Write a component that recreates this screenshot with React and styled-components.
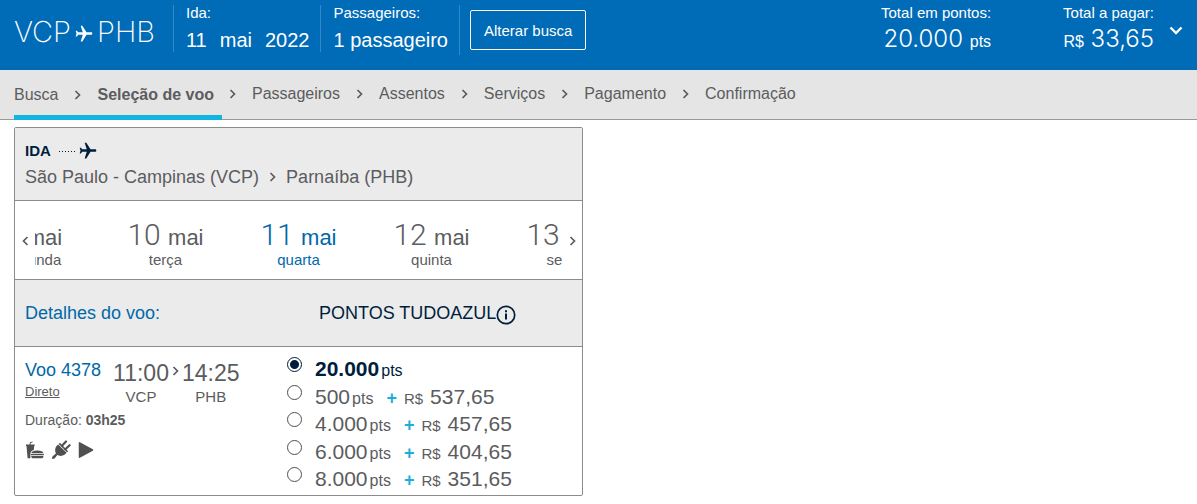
import React, { useState } from "react";
import styled, { createGlobalStyle } from "styled-components";
import { MdFlight } from "react-icons/md";

const GlobalStyle = createGlobalStyle`
    * {
        box-sizing: border-box;
    }
    body {
        margin: 0;
        background-color: #fff;
        color: #5b5c5e;
        font-family: "Liberation Sans", Arial, sans-serif;
        font-size: 15px;
    }
    button {
        font-family: inherit;
        color: inherit;
        cursor: pointer;
    }
`;

const Header = styled.header`
    min-height: 70px;
    padding: 5px 14px 0;
    background-color: #006bb7;
    color: #fff;
    display: flex;
    align-items: flex-start;
`;

const Airports = styled.div`
    height: 52px;
    margin-right: 18px;
    display: flex;
    align-items: center;
    gap: 3px;
    font-family: Inter, sans-serif;
    font-weight: 200;
    font-size: 29px;

    svg {
        margin-top: 5px;
    }
`;

const PlaneIcon = styled(MdFlight)`
    transform: rotate(90deg);
    flex-shrink: 0;
`;

const TripInfo = styled.div`
    min-height: 45px;
    padding: 0 11px 0 12px;
    border-left: 1px solid #3389c5;
`;

const ChangeSearch = styled.div`
    min-height: 50px;
    padding: 5px 10px 0;
    border-left: 1px solid #3389c5;
`;

const InfoLabel = styled.div`
    font-size: 15px;
    line-height: 16px;
    white-space: nowrap;
`;

const InfoValue = styled.div`
    display: flex;
    gap: 13px;
    margin-top: 7px;
    font-size: 20px;
    line-height: 24px;
    white-space: nowrap;
`;

const ChangeButton = styled.button`
    height: 40px;
    padding: 0 13px;
    border: 1px solid #fff;
    border-radius: 2px;
    background: none;
    font-size: 15px;
    white-space: nowrap;
`;

const Totals = styled.div`
    margin-left: auto;
    display: flex;
    gap: 72px;
    text-align: right;
`;

const TotalValue = styled.div`
    margin-top: 2px;
    font-family: Inter, sans-serif;
    font-weight: 300;
    font-size: 24px;
    line-height: 32px;
    white-space: nowrap;

    small {
        font-family: "Liberation Sans", Arial, sans-serif;
        font-weight: 400;
        font-size: 16px;
    }
`;

const ToggleButton = styled.button`
    margin: 18px 0 0 15px;
    padding: 0;
    border: none;
    background: none;
    display: flex;
`;

const Steps = styled.nav`
    min-height: 50px;
    padding: 0 14px;
    background-color: #e5e5e5;
    border-bottom: 1px solid #999;
    display: flex;
`;

const StepGroup = styled.div`
    display: flex;
    align-items: center;
    gap: 16px;
    padding-bottom: 1px;
`;

const DoneSteps = styled(StepGroup)`
    padding: 4px 8px 0 0;
    margin: 0 7px -1px 0;
    border-bottom: 5px solid #12b5de;
`;

const Step = styled.a`
    color: inherit;
    text-decoration: none;
    font-size: 16px;
    line-height: 20px;
    font-weight: ${({ $current }) => ($current ? "bold" : "normal")};
    white-space: nowrap;
`;

const Main = styled.main`
    padding: 7px 14px;
    display: grid;
    grid-template-columns: 1fr 1fr;
    gap: 31px;
`;

const Card = styled.section`
    border: 1px solid #8c8c8c;
    border-radius: 2px;
    min-width: 0;
`;

const RouteHeader = styled.div`
    padding: 13px 10px 12px;
    background-color: #ebebeb;
    border-bottom: 1px solid #8c8c8c;
`;

const Direction = styled.div`
    display: flex;
    align-items: center;
    gap: 3px;
    color: #001e3c;
    font-weight: bold;
    font-size: 15px;
    line-height: 20px;
`;

const Dots = styled.span`
    width: 16px;
    height: 1px;
    margin-left: 5px;
    background: repeating-linear-gradient(90deg, #001e3c 0 1px, transparent 1px 3px);
`;

const Route = styled.div`
    margin-top: 5px;
    display: flex;
    align-items: center;
    gap: 10px;
    font-size: 18px;
    line-height: 22px;
`;

const DateBar = styled.div`
    display: flex;
    border-bottom: 1px solid #8c8c8c;
`;

const ArrowButton = styled.button`
    width: 20px;
    padding: 2px 0 0;
    border: none;
    background: none;
    display: flex;
    align-items: center;
    justify-content: center;
`;

const DateStrip = styled.div`
    flex: 1;
    min-width: 0;
    overflow: hidden;
    display: flex;
    justify-content: center;
`;

const DateButton = styled.button`
    flex: 0 0 133px;
    padding: 17px 0 11px;
    border: none;
    background: none;
    color: ${({ $selected }) => ($selected ? "#0068a9" : "inherit")};
    text-align: center;
`;

const DayMonth = styled.div`
    font-family: Roboto, sans-serif;
    font-weight: 300;
    font-size: 30px;
    line-height: 34px;

    small {
        font-family: "Liberation Sans", Arial, sans-serif;
        font-weight: 400;
        font-size: 22px;
        line-height: 1;
    }
`;

const Weekday = styled.div`
    font-size: 15px;
    line-height: 16px;
`;

const FareHeader = styled.div`
    min-height: 67px;
    padding: 0 10px;
    background-color: #ebebeb;
    border-bottom: 1px solid #8c8c8c;
    display: grid;
    grid-template-columns: 294px 1fr;
    align-items: center;
    font-size: 18px;
`;

const DetailsTitle = styled.div`
    color: #0068a9;
`;

const FareTitle = styled.div`
    display: flex;
    align-items: center;
    color: #001e3c;
    white-space: nowrap;

    svg {
        margin-top: 3px;
    }
`;

const Flight = styled.div`
    min-height: 148px;
    padding-left: 10px;
    display: grid;
    grid-template-columns: 262px 1fr;
`;

const FlightDetails = styled.div`
    padding-top: 12px;
`;

const FlightTop = styled.div`
    display: flex;
    gap: 12px;
`;

const FlightNumber = styled.div`
    color: #0068a9;
    font-size: 18px;
    line-height: 22px;
`;

const Stops = styled.a`
    display: block;
    margin-top: 3px;
    color: #5b5c5e;
    font-size: 13px;
    line-height: 16px;
    text-decoration: underline;
`;

const Times = styled.div`
    display: flex;
    gap: 3px;

    svg {
        margin-top: 7px;
    }
`;

const Leg = styled.div`
    text-align: center;
    font-size: 15px;
    line-height: 20px;
`;

const Hour = styled.div`
    font-size: 23px;
    line-height: 28px;
`;

const Duration = styled.div`
    margin-top: 3px;
    font-size: 14px;
    line-height: 20px;
`;

const Amenities = styled.div`
    margin-top: 10px;
    display: flex;
    align-items: center;
    gap: 7px;
    color: #4f5052;
`;

const Fares = styled.div`
    padding: 8px 0 2px;
    display: grid;
    grid-auto-rows: 1fr;
`;

const FareRow = styled.label`
    display: flex;
    align-items: flex-start;
    gap: 13px;
    color: ${({ $selected }) => ($selected ? "#001e3c" : "inherit")};
    font-size: 16px;
    line-height: 20px;
    cursor: pointer;
`;

const Radio = styled.input`
    appearance: none;
    width: 15px;
    height: 15px;
    margin: 2px 0 0;
    border: 1px solid #4f5052;
    border-radius: 50%;
    background-color: #fff;

    &:checked {
        border-color: #001e3c;
        background: radial-gradient(#001e3c 4px, #fff 5px);
    }
`;

const FareText = styled.span`
    padding-top: 1px;
    display: flex;
    align-items: baseline;
    white-space: nowrap;
`;

const Points = styled.span`
    margin-right: 2px;
    font-size: 21px;
    line-height: 26px;
    font-weight: ${({ $selected }) => ($selected ? "bold" : "normal")};
`;

const Plus = styled.span`
    margin: 0 7px 0 13px;
    color: #1aaed8;
    font-size: 18px;
    font-weight: bold;
`;

const Money = styled.span`
    display: flex;
    align-items: baseline;
    gap: 7px;
    font-size: 15px;

    b {
        font-size: 21px;
        font-weight: normal;
    }
`;

const steps = ["Passageiros", "Assentos", "Serviços", "Pagamento", "Confirmação"];

const dates = [
    { day: "9", weekday: "segunda" },
    { day: "10", weekday: "terça" },
    { day: "11", weekday: "quarta" },
    { day: "12", weekday: "quinta" },
    { day: "13", weekday: "sexta" },
];

const fares = [
    { points: "20.000" },
    { points: "500", money: "537,65" },
    { points: "4.000", money: "457,65" },
    { points: "6.000", money: "404,65" },
    { points: "8.000", money: "351,65" },
];

const Chevron = ({ left }) => (
    <svg width="7" height="10" viewBox="0 0 7 10" fill="none" stroke="currentColor" strokeWidth="1.7">
        <path d={left ? "M5.5 1l-4 4 4 4" : "M1.5 1l4 4-4 4"} />
    </svg>
);

const SnackIcon = () => (
    <svg width="19" height="18" viewBox="0 0 19 18" fill="currentColor">
        <path d="M4.500 4 5 1.300 7.500.4l.3.8-2 .8L5.500 4z" />
        <path d="M1 3.600h8.600v1.400H1zM1.500 5h7.700l-.4 4C6.800 9.600 5.600 10.800 5.400 12.500V17.200H2.600z" />
        <path d="M6.300 12.300c.3-2 2.300-2.900 6-2.900s5.800.9 6.200 2.900zM5.900 12.900h13v1.400h-13zM6.200 14.900h12.300c-.1 1.600-.8 2.300-2.100 2.300h-8c-1.300 0-2.100-.7-2.200-2.300z" />
    </svg>
);

const PlugIcon = () => (
    <svg width="20" height="20" viewBox="0 0 20 20" fill="currentColor">
        <path d="M7.200 4.400 15.600 12.800l-1.700 1.700c-2.400 1.700-5.400 1.800-7.600.6L3.600 18.600.9 19.100l.5-2.700L4.900 13.500c-1.200-2.300-1-5.200.6-7.400z" />
        <path d="M8.300 3.400l8.300 8.300" stroke="currentColor" strokeWidth="1.6" />
        <path d="M11 5.800l4-4.300M14.300 9.200l4.300-4" stroke="currentColor" strokeWidth="2.200" strokeLinecap="round" />
    </svg>
);

const PlayIcon = () => (
    <svg width="16" height="18" viewBox="0 0 16 18" fill="currentColor">
        <path d="M1.5 1.8v14.4L14.5 9z" stroke="currentColor" strokeWidth="1.5" strokeLinejoin="round" />
    </svg>
);

const InfoIcon = () => (
    <svg width="20" height="20" viewBox="0 0 20 20" fill="none" stroke="currentColor">
        <circle cx="10" cy="10" r="8.7" strokeWidth="1.7" />
        <path d="M10 8.5v6M10 5.2v2" strokeWidth="2" />
    </svg>
);

const App = () => {
    const [date, setDate] = useState("11");
    const [fare, setFare] = useState("20.000");

    return (
        <>
            <GlobalStyle />
            <Header>
                <Airports>
                    VCP
                    <PlaneIcon size={20} />
                    PHB
                </Airports>
                <TripInfo>
                    <InfoLabel>Ida:</InfoLabel>
                    <InfoValue>
                        <span>11</span>
                        <span>mai</span>
                        <span>2022</span>
                    </InfoValue>
                </TripInfo>
                <TripInfo>
                    <InfoLabel>Passageiros:</InfoLabel>
                    <InfoValue>1 passageiro</InfoValue>
                </TripInfo>
                <ChangeSearch>
                    <ChangeButton type="button">Alterar busca</ChangeButton>
                </ChangeSearch>
                <Totals>
                    <div>
                        <InfoLabel>Total em pontos:</InfoLabel>
                        <TotalValue>
                            20.000 <small>pts</small>
                        </TotalValue>
                    </div>
                    <div>
                        <InfoLabel>Total a pagar:</InfoLabel>
                        <TotalValue>
                            <small>R$</small> 33,65
                        </TotalValue>
                    </div>
                </Totals>
                <ToggleButton type="button" aria-label="Detalhes do total">
                    <svg width="14" height="14" viewBox="0 0 14 14" fill="none" stroke="currentColor" strokeWidth="2.4">
                        <path d="M1.5 4.5 7 10l5.5-5.500" />
                    </svg>
                </ToggleButton>
            </Header>
            <Steps>
                <DoneSteps>
                    <Step href="#">Busca</Step>
                    <Chevron />
                    <Step href="#" $current>
                        Seleção de voo
                    </Step>
                </DoneSteps>
                <StepGroup>
                    {steps.map((step) => (
                        <React.Fragment key={step}>
                            <Chevron />
                            <Step href="#">{step}</Step>
                        </React.Fragment>
                    ))}
                </StepGroup>
            </Steps>
            <Main>
                <Card>
                    <RouteHeader>
                        <Direction>
                            IDA
                            <Dots />
                            <PlaneIcon size={20} />
                        </Direction>
                        <Route>
                            São Paulo - Campinas (VCP)
                            <Chevron />
                            Parnaíba (PHB)
                        </Route>
                    </RouteHeader>
                    <DateBar>
                        <ArrowButton type="button" aria-label="Dias anteriores">
                            <Chevron left />
                        </ArrowButton>
                        <DateStrip>
                            {dates.map(({ day, weekday }) => (
                                <DateButton
                                    key={day}
                                    type="button"
                                    $selected={day === date}
                                    onClick={() => setDate(day)}
                                >
                                    <DayMonth>
                                        {day} <small>mai</small>
                                    </DayMonth>
                                    <Weekday>{weekday}</Weekday>
                                </DateButton>
                            ))}
                        </DateStrip>
                        <ArrowButton type="button" aria-label="Próximos dias">
                            <Chevron />
                        </ArrowButton>
                    </DateBar>
                    <FareHeader>
                        <DetailsTitle>Detalhes do voo:</DetailsTitle>
                        <FareTitle>
                            PONTOS TUDOAZUL
                            <InfoIcon />
                        </FareTitle>
                    </FareHeader>
                    <Flight>
                        <FlightDetails>
                            <FlightTop>
                                <div>
                                    <FlightNumber>Voo 4378</FlightNumber>
                                    <Stops href="#">Direto</Stops>
                                </div>
                                <Times>
                                    <Leg>
                                        <Hour>11:00</Hour>
                                        VCP
                                    </Leg>
                                    <Chevron />
                                    <Leg>
                                        <Hour>14:25</Hour>
                                        PHB
                                    </Leg>
                                </Times>
                            </FlightTop>
                            <Duration>
                                Duração: <b>03h25</b>
                            </Duration>
                            <Amenities>
                                <SnackIcon />
                                <PlugIcon />
                                <PlayIcon />
                            </Amenities>
                        </FlightDetails>
                        <Fares>
                            {fares.map(({ points, money }) => (
                                <FareRow key={points} $selected={points === fare}>
                                    <Radio
                                        type="radio"
                                        name="fare"
                                        checked={points === fare}
                                        onChange={() => setFare(points)}
                                    />
                                    <FareText>
                                        <Points $selected={points === fare}>{points}</Points>
                                        pts
                                        {money && (
                                            <>
                                                <Plus>+</Plus>
                                                <Money>
                                                    R$ <b>{money}</b>
                                                </Money>
                                            </>
                                        )}
                                    </FareText>
                                </FareRow>
                            ))}
                        </Fares>
                    </Flight>
                </Card>
            </Main>
        </>
    );
};

export default App;
